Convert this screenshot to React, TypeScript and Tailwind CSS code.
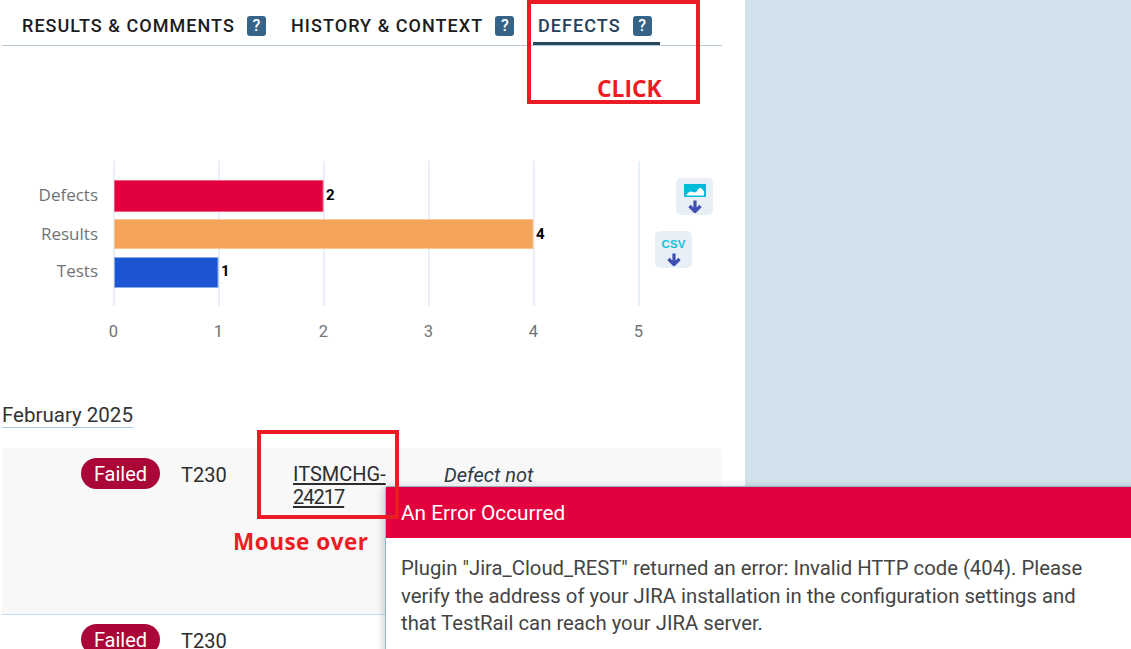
const sans = "font-['Roboto','Liberation_Sans',sans-serif]";

const tabs = [
  { label: 'RESULTS & COMMENTS', width: 'w-[269px]', active: false },
  { label: 'HISTORY & CONTEXT', width: 'w-[263px]', active: false },
  { label: 'DEFECTS', width: 'w-[122px]', active: true },
];

const bars = [
  { label: 'Defects', y: 180, h: 32, w: 209, fill: '#e4003f', stroke: '#ee5f85', value: '2', labelY: 201 },
  { label: 'Results', y: 219, h: 30, w: 419, fill: '#f3a35a', stroke: '#f8c897', value: '4', labelY: 240 },
  { label: 'Tests', y: 257, h: 31, w: 104, fill: '#1b55d2', stroke: '#8eaeea', value: '1', labelY: 277 },
];

const ticks = [0, 1, 2, 3, 4, 5];

function HelpBadge() {
  return (
    <span className="ml-[12px] flex h-[20px] w-[19px] items-center justify-center rounded-[3px] bg-[#356488] text-[16px] font-medium leading-none text-white">
      ?
    </span>
  );
}

function ArrowDown() {
  return (
    <svg width="14" height="13" viewBox="0 0 14 13" fill="none">
      <path d="M7 0.5v10M1.5 6l5.500 5.500L12.500 6" stroke="#3f4db5" strokeWidth="3.2" strokeLinejoin="round" />
    </svg>
  );
}

function ExportButtons() {
  return (
    <>
      <div className="absolute left-[676px] top-[178px] flex h-[37px] w-[37px] flex-col items-center rounded-[5px] bg-[#e8eff7] pt-[6px]">
        <svg width="22" height="13" viewBox="0 0 22 13">
          <rect width="22" height="13" rx="1" fill="#00bcd9" />
          <path d="M2 11.500c2-3 3.500-4 5-4 2 0 2.500 1 4 1 2 0 3-4.500 5-4.500 1.500 0 3 2 4 3.500v4z" fill="#fff" />
        </svg>
        <span className="mt-[3px] flex">
          <ArrowDown />
        </span>
      </div>
      <div className="absolute left-[655px] top-[231px] flex h-[37px] w-[37px] flex-col items-center rounded-[5px] bg-[#e8eff7] pt-[7px]">
        <span className="font-['Liberation_Sans',sans-serif] text-[11.5px] font-bold leading-[13px] tracking-[0.2px] text-[#1bbdd6]">CSV</span>
        <span className="mt-[2px] flex">
          <ArrowDown />
        </span>
      </div>
    </>
  );
}

function Chart() {
  return (
    <svg width="745" height="200" viewBox="0 150 745 200" className="block">
      {ticks.map((t) => (
        <line key={t} x1={114 + t * 105} x2={114 + t * 105} y1="161" y2="306" stroke="#e9eff6" strokeWidth="2" />
      ))}
      {bars.map((b) => (
        <g key={b.label}>
          <rect x="114.5" y={b.y + 0.5} width={b.w - 0.5} height={b.h - 1} fill={b.fill} stroke={b.stroke} />
          <text x="98" y={b.labelY} textAnchor="end" fontSize="17" fill="#6f7376" fontFamily="'Open Sans', sans-serif">
            {b.label}
          </text>
          <text x={114 + b.w + 3} y={b.labelY - 1} fontSize="15" fontWeight="700" fill="#000" fontFamily="'Roboto', sans-serif">
            {b.value}
          </text>
        </g>
      ))}
      {ticks.map((t) => (
        <text key={t} x={113.5 + t * 105} y="337" textAnchor="middle" fontSize="16.5" fill="#6f7376" fontFamily="'Roboto', sans-serif">
          {t}
        </text>
      ))}
    </svg>
  );
}

function DefectRow({ first }: { first?: boolean }) {
  return (
    <div className={`flex items-start ${first ? 'h-[167px] rounded-t-[4px] border-b border-[#c9dcec] bg-[#f8f8f8] pt-[10px]' : 'mt-[9px]'}`}>
      <span className="ml-[79px] flex h-[31px] w-[79px] shrink-0 items-center justify-center rounded-full bg-[#aa0637] text-[20px] text-white">
        Failed
      </span>
      <span className="ml-[21px] w-[112px] shrink-0 pt-[5px] text-[20px] leading-[24px] text-[#2d2d2d]">T230</span>
      {first && (
        <>
          <a className="w-[100px] shrink-0 pt-[5px] text-[20px] leading-[23px] text-[#2d2d2d] underline underline-offset-2">
            ITSMCHG-
            <br />
            <span className="tracking-[-1px]">24217</span>
          </a>
          <span className="ml-[51px] pt-[5px] text-[20px] italic leading-[24px] text-[#2d3b4a]">Defect not</span>
        </>
      )}
    </div>
  );
}

export default function App() {
  return (
    <div className={`relative flex h-[649px] w-[1131px] overflow-hidden bg-white ${sans}`}>
      {/* Main panel */}
      <div className="relative h-full w-[745px] shrink-0 bg-white">
        <div className="ml-[2px] flex h-[46px] w-[720px] border-b border-[#b6c7d3] pl-[20px]">
          {tabs.map((tab) => (
            <div key={tab.label} className={`${tab.width} shrink-0`}>
              <div className="flex h-[46px] items-start">
                <div className={`relative flex items-center pt-[15px] ${tab.active ? '-ml-[16px]' : ''}`}>
                  <span className={`whitespace-nowrap text-[18px] font-medium leading-[21px] tracking-[1.05px] ${tab.active ? 'text-[#24405a]' : 'text-[#1c1c1c]'}`}>
                    {tab.label}
                  </span>
                  <HelpBadge />
                  {tab.active && <span className="absolute -left-[5px] top-[42px] h-[3px] w-[127px] bg-[#27475f]" />}
                </div>
              </div>
            </div>
          ))}
        </div>

        <div className="h-[104px]" />
        <Chart />
        <ExportButtons />

        <div className="ml-[2px] mt-[53px] w-[720px]">
          <span className="inline-block border-b border-[#a9c8df] text-[20.5px] leading-[24px] text-[#333]">February 2025</span>
          <div className="mt-[19px]">
            <DefectRow first />
            <DefectRow />
          </div>
        </div>
      </div>

      {/* Side area */}
      <div className="flex-1 bg-[#d0e1eb]" />

      {/* Annotations */}
      <div className="absolute left-[527px] top-0 h-[104px] w-[173px] border-[4px] border-[#ed1c24]" />
      <span className="absolute left-[597px] top-[75px] font-['Open_Sans',sans-serif] text-[22.8px] font-bold leading-[28px] text-[#ed1c24]">CLICK</span>
      <span className="absolute left-[233px] top-[528px] font-['Open_Sans',sans-serif] text-[22.5px] font-bold leading-[28px] tracking-[0.5px] text-[#ed1c24]">Mouse over</span>

      {/* Error tooltip */}
      <div className="absolute left-[385px] top-[486px] h-[170px] w-[760px] rounded-tl-[4px] border-l border-t border-[#8fb6cf] bg-white shadow-[-3px_0_6px_rgba(0,0,0,0.15)]">
        <div className="flex h-[51px] items-center bg-[#e4003f] pl-[15px] pt-[3px] text-[20.8px] text-white">An Error Occurred</div>
        <p className="w-[700px] pl-[15px] pt-[17px] text-[20.3px] leading-[27.5px] text-[#444]">
          Plugin "Jira_Cloud_REST" returned an error: Invalid HTTP code (404). Please verify the address of your JIRA installation in the configuration settings and that TestRail can reach your JIRA server.
        </p>
      </div>
      <div className="absolute left-[257px] top-[430px] h-[89px] w-[142px] border-[4px] border-[#ed1c24]" />
    </div>
  );
}
